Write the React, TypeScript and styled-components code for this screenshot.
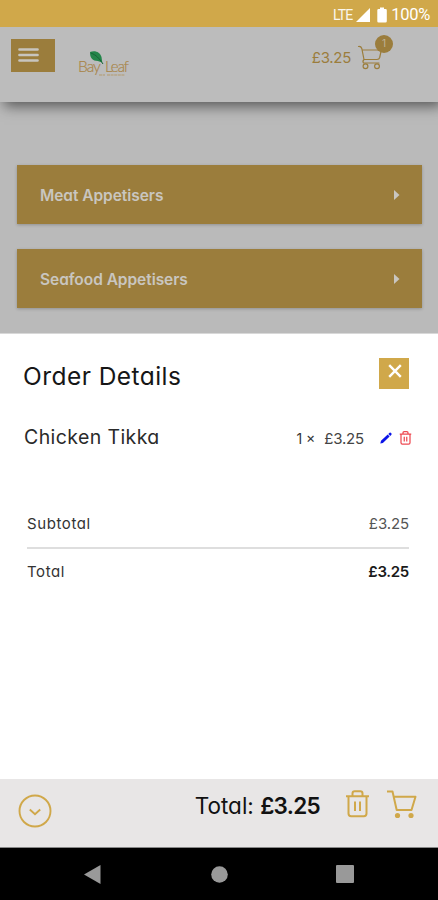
import React from "react";
import styled, { createGlobalStyle } from "styled-components";

const gold = "#d0a84a";
const dimGold = "#9b7d3c";

const GlobalStyle = createGlobalStyle`
  * { box-sizing: border-box; }
  body { margin: 0; background: #bababa; }
  svg { display: block; flex: none; }
  button { border: 0; padding: 0; font: inherit; color: inherit; background: none; }
`;

const Screen = styled.div`
  width: 438px;
  height: 900px;
  display: flex;
  flex-direction: column;
  overflow: hidden;
  background: #bababa;
  font-family: Inter, "Open Sans", sans-serif;
  font-feature-settings: "cv11", "ss03";
`;

const StatusBar = styled.div`
  height: 27px;
  flex: none;
  display: flex;
  align-items: center;
  justify-content: flex-end;
  padding: 2px 8px 0 0;
  background: ${gold};
  color: #fff;
  font-family: Roboto, sans-serif;
  z-index: 1;
`;

const Network = styled.span`
  font-size: 14px;
  letter-spacing: -0.9px;
  margin-right: 4px;
  opacity: 0.9;
`;

const Battery = styled.span`
  font-size: 16.5px;
  letter-spacing: -0.3px;
  margin-left: 4px;
`;

const Header = styled.header`
  height: 75px;
  flex: none;
  display: flex;
  align-items: flex-start;
  padding: 12px 44px 0 11px;
  background: #bcbcbc;
  box-shadow: 4px 4px 13px rgba(0, 0, 0, 0.55);
`;

const MenuButton = styled.button`
  display: flex;
  align-items: flex-start;
  width: 44px;
  height: 33px;
  padding: 8px 0 0 7px;
  background: ${dimGold};
`;

const Logo = styled.div`
  margin: 11px 0 0 23px;
`;

const HeaderPrice = styled.span`
  margin: 9px 6px 0 auto;
  font-size: 15px;
  line-height: 20px;
  letter-spacing: -0.3px;
  color: ${dimGold};
`;

const CartHolder = styled.div`
  position: relative;
  width: 37px;
  height: 40px;
  padding-top: 6px;
`;

const CartBadge = styled.span`
  position: absolute;
  top: -4px;
  right: 1px;
  width: 18px;
  height: 18px;
  border-radius: 50%;
  background: ${dimGold};
  color: #c0b497;
  font-size: 10px;
  line-height: 17px;
  text-align: center;
`;

const Categories = styled.main`
  height: 231px;
  flex: none;
  display: flex;
  flex-direction: column;
  gap: 25px;
  padding: 63px 16px 0 17px;
`;

const Category = styled.button`
  height: 59px;
  flex: none;
  display: flex;
  align-items: center;
  justify-content: space-between;
  padding: 1px 22px 0 23px;
  background: ${dimGold};
  box-shadow: 0 1px 3px rgba(0, 0, 0, 0.22);
  color: #c9c6c0;
`;

const CategoryName = styled.span`
  font-size: 15.5px;
  font-weight: 600;
  letter-spacing: -0.05px;
`;

const Sheet = styled.section`
  height: 446px;
  flex: none;
  display: flex;
  flex-direction: column;
  background: #fff;
  border-top: 1px solid #d8d8d8;
  z-index: 1;
`;

const SheetHeader = styled.div`
  display: flex;
  justify-content: space-between;
  padding: 24px 29.5px 0 23px;
`;

const SheetTitle = styled.h2`
  margin: 2px 0 0;
  font-size: 24.5px;
  line-height: 32px;
  font-weight: 400;
  letter-spacing: 0.45px;
  color: #161616;
`;

const CloseButton = styled.button`
  display: flex;
  align-items: flex-start;
  width: 30px;
  height: 31px;
  padding: 6px 0 0 9px;
  background: ${gold};
`;

const OrderRow = styled.div`
  display: flex;
  align-items: center;
  height: 30px;
  margin-top: 30px;
  padding: 0 26px 0 24px;
`;

const ItemName = styled.span`
  font-size: 19.5px;
  font-weight: 400;
  letter-spacing: 0.4px;
  color: #2a2a2a;
`;

const ItemQuantity = styled.span`
  margin: 3px 9px 0 auto;
  font-size: 14px;
  color: #333;
`;

const ItemPrice = styled.span`
  margin-top: 3px;
  margin-right: 16px;
  font-size: 15px;
  letter-spacing: -0.2px;
  color: #444;
`;

const RowActions = styled.div`
  display: flex;
  align-items: center;
  gap: 7px;
  margin-top: 2px;
`;

const Summary = styled.div`
  margin: 60px 29px 0 27px;
`;

const SummaryRow = styled.div<{ $ruled?: boolean }>`
  display: flex;
  justify-content: space-between;
  height: ${(p) => (p.$ruled ? 37 : 46)}px;
  border-bottom: ${(p) => (p.$ruled ? "2px solid #dedede" : "0")};
  padding-top: ${(p) => (p.$ruled ? 0 : 11)}px;
  line-height: 23px;
  font-size: 15px;
  letter-spacing: 0.6px;
  color: #333;
`;

const Amount = styled.span<{ $strong?: boolean }>`
  font-size: 15px;
  font-weight: ${(p) => (p.$strong ? 600 : 400)};
  letter-spacing: ${(p) => (p.$strong ? -0.3 : -0.1)}px;
  color: ${(p) => (p.$strong ? "#1a1a1a" : "#555")};
`;

const Footer = styled.footer`
  height: 69px;
  flex: none;
  display: flex;
  align-items: flex-start;
  padding: 10px 21px 0 18px;
  background: #e8e6e6;
  border-bottom: 1px solid #888;
`;

const CollapseButton = styled.button`
  margin: 5px auto 0 0;
`;

const FooterTotal = styled.span`
  margin: 2px 25px 0 0;
  font-size: 22.5px;
  line-height: 30px;
  letter-spacing: 0;
  color: #111;
`;

const FooterAmount = styled.b`
  font-weight: 600;
  letter-spacing: -0.7px;
`;

const FooterActions = styled.div`
  display: flex;
  gap: 16px;
  padding-top: 1px;
`;

const NavBar = styled.nav`
  flex: 1;
  display: grid;
  grid-template-columns: repeat(3, 126px);
  justify-content: center;
  justify-items: center;
  align-items: center;
  background: #000;
`;

const BackIcon = styled.svg`
  margin-right: 2px;
`;

function CartOutline() {
  return (
    <svg width="26" height="26" viewBox="0 0 26 26" fill="none" stroke={dimGold} strokeWidth="1.2" strokeLinejoin="round" strokeLinecap="round">
      <path d="M1.5 1.500q2.500-.3 3.300 2L7 14.500h13q2.200 0 2.700-2L24.300 5H5.200M7 14.500q-1.800 1.800-.5 3.500h15.500" />
      <circle cx="8.500" cy="21.300" r="2.400" />
      <circle cx="20" cy="21.300" r="2.400" />
    </svg>
  );
}

function Trash({ width, height, color, stroke }: { width: number; height: number; color: string; stroke: number }) {
  return (
    <svg width={width} height={height} viewBox="0 0 24 28" fill="none" stroke={color} strokeWidth={stroke} strokeLinejoin="round">
      <path d="M0.5 6.2h23M3 6.2v17.3q0 2.7 2.7 2.7h12.6q2.7 0 2.7-2.7V6.2M7 6V3.5Q7 1.3 9.2 1.3h5.6Q17 1.3 17 3.5V6M9.5 11.5v9.5M14.5 11.5v9.5" />
    </svg>
  );
}

export default function App() {
  return (
    <>
      <GlobalStyle />
      <Screen>
        <StatusBar>
          <Network>LTE</Network>
          <svg width="14" height="14" viewBox="0 0 14 14"><path d="M0 14 14 0v14z" fill="#fff" /></svg>
          <svg width="17" height="16" viewBox="0 0 17 16"><path d="M10 2V.5h4V2h1.500q1.300 0 1.300 1.300v10.900q0 1.300-1.300 1.300H8.600q-1.300 0-1.300-1.300V3.300Q7.300 2 8.600 2z" fill="#fff" /></svg>
          <Battery>100%</Battery>
        </StatusBar>
        <Header>
          <MenuButton aria-label="Menu">
            <svg width="21" height="16" viewBox="0 0 21 16" stroke="#c8c5be" strokeWidth="2.7" strokeLinecap="round"><path d="M1.500 2.500h18M1.500 8h18M1.500 13.500h18" /></svg>
          </MenuButton>
          <Logo>
            <svg width="64" height="34" viewBox="0 0 64 34">
              <g fill="#a98548" fontFamily="Lato, sans-serif" fontWeight="300" stroke="#a98548" strokeWidth=".2">
                <text x="0" y="22" fontSize="15.500" letterSpacing="-1">Bay</text>
                <text x="27" y="22" fontSize="15" letterSpacing="-1">Leaf</text>
              </g>
              <path d="M21 25h6M29 25h18" stroke="#b39a6c" strokeWidth="1" strokeDasharray="3 .6" />
              <path d="M12 2c5-2 10 0 11.500 5l.8 5.500-4.500-1.500c-5 0-8-3-7.800-9z" fill="#23854a" />
              <path d="M13 3c5 2 8 5 12 11" fill="none" stroke="#176237" strokeWidth="1" />
            </svg>
          </Logo>
          <HeaderPrice>£3.25</HeaderPrice>
          <CartHolder>
            <CartOutline />
            <CartBadge>1</CartBadge>
          </CartHolder>
        </Header>
        <Categories>
          <Category>
            <CategoryName>Meat Appetisers</CategoryName>
            <svg width="6" height="10" viewBox="0 0 6 10"><path d="M0 0l5.500 5L0 10z" fill="#c9c6c0" /></svg>
          </Category>
          <Category>
            <CategoryName>Seafood Appetisers</CategoryName>
            <svg width="6" height="10" viewBox="0 0 6 10"><path d="M0 0l5.500 5L0 10z" fill="#c9c6c0" /></svg>
          </Category>
        </Categories>
        <Sheet>
          <SheetHeader>
            <SheetTitle>Order Details</SheetTitle>
            <CloseButton aria-label="Close">
              <svg width="14" height="14" viewBox="0 0 14 14" stroke="#fff" strokeWidth="2.400"><path d="M1.200 1.200l11.600 11.600M12.800 1.200l-11.600 11.600" /></svg>
            </CloseButton>
          </SheetHeader>
          <OrderRow>
            <ItemName>Chicken Tikka</ItemName>
            <ItemQuantity>1 ×</ItemQuantity>
            <ItemPrice>£3.25</ItemPrice>
            <RowActions>
              <svg width="12" height="12" viewBox="0 0 12 12" fill="#0b14e8"><path d="M.3 11.500l.7-2.700 6.700-6.200 1.900 2L2.900 10.900zM8.300 2 9.600.8q.6-.5 1.100 0l.8.800q.4.600-.1 1.100L10.200 4z" /></svg>
              <Trash width={13} height={14} color="#ee4a52" stroke={2.5} />
            </RowActions>
          </OrderRow>
          <Summary>
            <SummaryRow $ruled>
              <span>Subtotal</span>
              <Amount>£3.25</Amount>
            </SummaryRow>
            <SummaryRow>
              <span>Total</span>
              <Amount $strong>£3.25</Amount>
            </SummaryRow>
          </Summary>
        </Sheet>
        <Footer>
          <CollapseButton aria-label="Collapse">
            <svg width="34" height="34" viewBox="0 0 34 34" fill="none" stroke={gold} strokeWidth="1.900"><circle cx="17" cy="17" r="15.500" /><path d="M11.800 15.500l5.200 4.700 5.200-4.700" /></svg>
          </CollapseButton>
          <FooterTotal>Total: <FooterAmount>£3.25</FooterAmount></FooterTotal>
          <FooterActions>
            <Trash width={25} height={28} color={gold} stroke={2} />
            <svg width="31" height="30" viewBox="0 0 31 30" fill="none" stroke={gold} strokeWidth="2" strokeLinejoin="round"><path d="M1 1.500h5.500l4.200 18.500h14.800l4-13.300H8" /><g fill={gold} stroke="none"><circle cx="11.500" cy="25.500" r="2.600" /><circle cx="25" cy="25.500" r="2.600" /></g></svg>
          </FooterActions>
        </Footer>
        <NavBar>
          <BackIcon width="17" height="19" viewBox="0 0 17 19"><path d="M0 9.500 16.500 0v19z" fill="#999" /></BackIcon>
          <svg width="17" height="17" viewBox="0 0 17 17"><circle cx="8.500" cy="8.500" r="8.300" fill="#999" /></svg>
          <svg width="18" height="18" viewBox="0 0 18 18"><rect width="18" height="18" rx="1" fill="#999" /></svg>
        </NavBar>
      </Screen>
    </>
  );
}
